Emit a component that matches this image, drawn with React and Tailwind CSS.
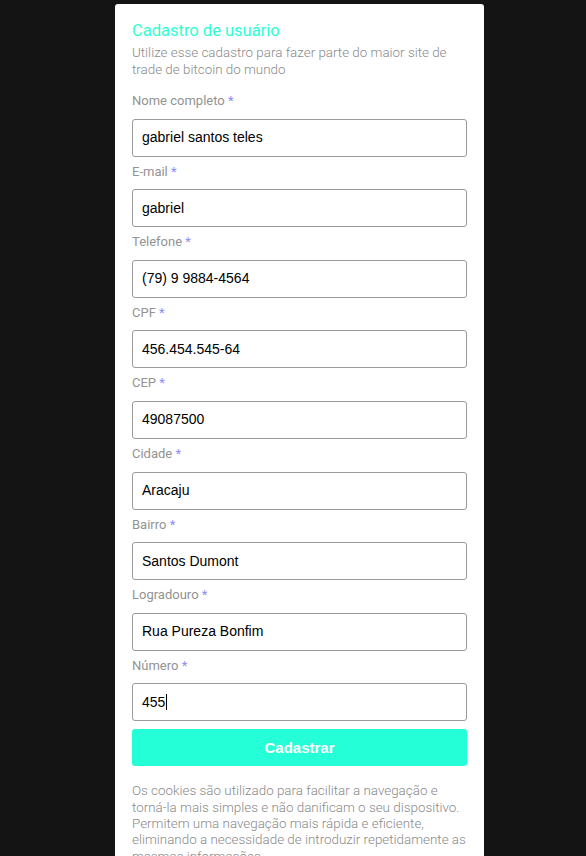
import React from "react";

const fields = [
  ["Nome completo", "gabriel santos teles"],
  ["E-mail", "gabriel"],
  ["Telefone", "(79) 9 9884-4564"],
  ["CPF", "456.454.545-64"],
  ["CEP", "49087500"],
  ["Cidade", "Aracaju"],
  ["Bairro", "Santos Dumont"],
  ["Logradouro", "Rua Pureza Bonfim"],
  ["Número", "455"],
];

export default function App() {
  return (
    <div className="w-[586px] h-[856px] overflow-hidden bg-[#141414] pt-[4px]">
      <div className="ml-[115px] w-[369px] h-[900px] bg-white rounded-[3px] px-[17px] pt-[17px] font-['Roboto',sans-serif]">
        <h1 className="text-[16.5px] leading-[20px] text-[#2effd2] font-normal">Cadastro de usuário</h1>
        <p className="mt-[3px] text-[13.4px] leading-[17px] text-[#8a8a8a] font-light">
          Utilize esse cadastro para fazer parte do maior site de trade de bitcoin do mundo
        </p>
        <div className="mt-[13px]">
          {fields.map(([label, value], i) => (
            <div key={label} className={i === 0 ? "" : "mt-[5px]"}>
              <div className="h-[20px] leading-[20px] text-[13px] text-[#939393] mb-[7.6px]">
                {label} <span className="text-[#8c8cff]">*</span>
              </div>
              <div className="h-[38px] border border-[#9a9a9a] rounded-[3px] flex items-center px-[9px] font-['Liberation_Sans',Arial,sans-serif] text-[14px] text-black">
                {value}
                {i === fields.length - 1 && <span className="inline-block w-px h-[16px] bg-black ml-px" />}
              </div>
            </div>
          ))}
        </div>
        <button className="mt-[8px] w-full h-[37px] rounded-[3px] bg-[#24ffd8] text-white font-bold text-[15px] font-['Liberation_Sans',Arial,sans-serif]">
          Cadastrar
        </button>
        <p className="mt-[17px] text-[13.4px] leading-[16.3px] text-[#8a8a8a] font-light">
          Os cookies são utilizado para facilitar a navegação e torná-la mais simples e não danificam o seu dispositivo. Permitem uma navegação mais rápida e eficiente, eliminando a necessidade de introduzir repetidamente as mesmas informações.
        </p>
      </div>
    </div>
  );
}
